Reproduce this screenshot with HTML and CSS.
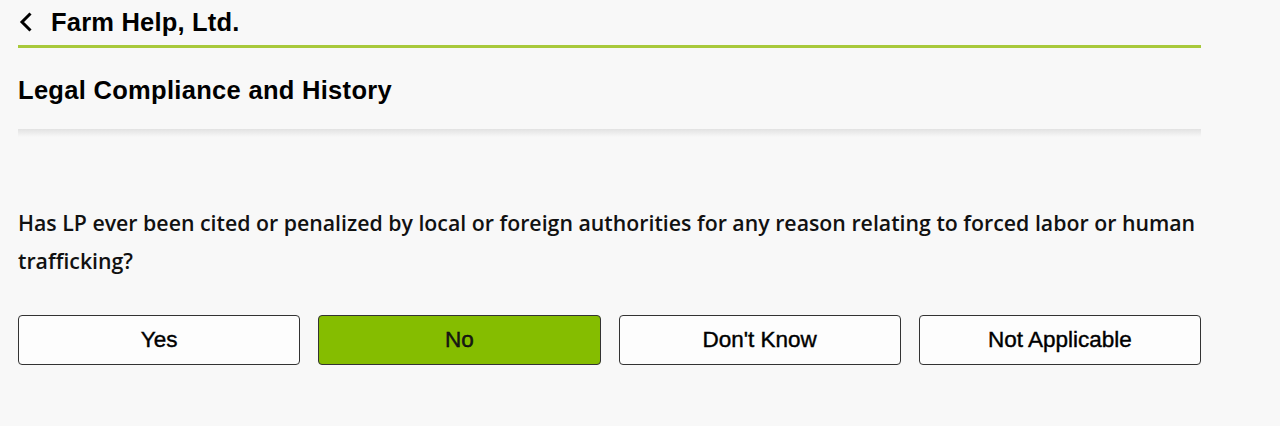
FILE: index.html
```html
<!DOCTYPE html>
<html lang="en">
<head>
    <meta charset="UTF-8">
    <meta name="viewport" content="width=device-width, initial-scale=1.0">
    <title>Farm Help, Ltd.</title>
    <link rel="stylesheet" href="styles.css">
</head>
<body>
    <div class="container">
        <div class="top-bar">
            <svg class="back" width="16" height="22" viewBox="0 0 16 22">
                <path d="M12.5 2.5 L4 11 L12.5 19.5" fill="none" stroke="#000" stroke-width="3"/>
            </svg>
            <h1>Farm Help, Ltd.</h1>
        </div>

        <div class="section-head">
            <h2>Legal Compliance and History</h2>
        </div>
        <div class="section-shadow"></div>

        <p class="question">Has LP ever been cited or penalized by local or foreign authorities for any reason relating to forced labor or human trafficking?</p>

        <div class="answers">
            <button class="answer">Yes</button>
            <button class="answer selected">No</button>
            <button class="answer">Don't Know</button>
            <button class="answer">Not Applicable</button>
        </div>
    </div>
</body>
</html>
```

FILE: styles.css
```css
body {
    font-family: 'Liberation Sans', Arial, sans-serif;
    background-color: #f8f8f8;
    margin: 0;
    padding: 0;
    color: #000;
}
.container {
    width: 1183px;
    margin-left: 18px;
}
.top-bar {
    display: flex;
    align-items: center;
    height: 48px;
    border-bottom: 3px solid #a8c93b;
    box-sizing: border-box;
    padding-left: 0;
}
.top-bar .back {
    margin-right: 17px;
    margin-top: -1px;
}
h1 {
    font-size: 25.5px;
    font-weight: bold;
    margin: 0;
    margin-top: -1px;
    letter-spacing: 0.2px;
}
.section-head {
    height: 81px;
}
h2 {
    font-size: 25.5px;
    font-weight: bold;
    margin: 0;
    padding-top: 28px;
    letter-spacing: 0.3px;
}
.section-shadow {
    height: 8px;
    background: linear-gradient(to bottom, #e2e2e2, #f8f8f8);
}
.question {
    font-family: 'Open Sans', sans-serif;
    font-size: 21.3px;
    font-weight: 600;
    line-height: 38px;
    margin: 67px 0 0 0;
    color: #111;
}
.answers {
    display: grid;
    grid-template-columns: repeat(4, 1fr);
    gap: 18px;
    margin-top: 35px;
}
.answer {
    height: 50px;
    background-color: #fdfdfd;
    border: 1px solid #333;
    border-radius: 4px;
    font-family: 'Liberation Sans', Arial, sans-serif;
    font-size: 22.5px;
    color: #000;
    cursor: pointer;
    -webkit-text-stroke: 0.4px #000;
}
.answer.selected {
    background-color: #85bd00;
    color: #1a1a1a;
}
```
